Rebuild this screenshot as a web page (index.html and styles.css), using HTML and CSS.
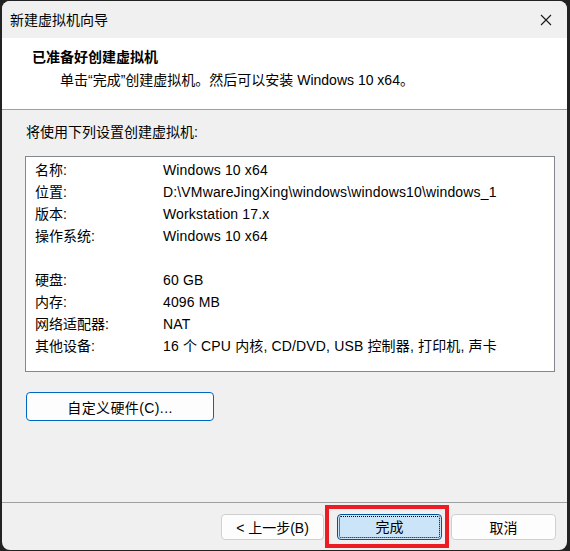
FILE: index.html
```html
<!DOCTYPE html>
<html lang="zh-CN">
<head>
    <meta charset="UTF-8">
    <meta name="viewport" content="width=device-width, initial-scale=1.0">
    <title>新建虚拟机向导</title>
    <link rel="stylesheet" href="styles.css">
</head>
<body>
    <div class="window">
        <!-- 标题栏 -->
        <div class="titlebar">
            <span class="title">新建虚拟机向导</span>
            <svg class="close" width="12" height="12" viewBox="0 0 12 12">
                <path d="M1 1 L11 11 M11 1 L1 11" stroke="#1a1a1a" stroke-width="1.1" fill="none"/>
            </svg>
        </div>

        <!-- 顶部说明 -->
        <div class="header">
            <div class="header-title">已准备好创建虚拟机</div>
            <div class="header-sub">单击“完成”创建虚拟机。然后可以安装 Windows 10 x64。</div>
        </div>

        <div class="content">
            <div class="intro">将使用下列设置创建虚拟机:</div>

            <div class="summary">
                <div class="row"><span>名称:</span><span class="val">Windows 10 x64</span></div>
                <div class="row"><span>位置:</span><span class="val">D:\VMwareJingXing\windows\windows10\windows_1</span></div>
                <div class="row"><span>版本:</span><span class="val">Workstation 17.x</span></div>
                <div class="row"><span>操作系统:</span><span class="val">Windows 10 x64</span></div>
                <div class="row"><span></span><span></span></div>
                <div class="row"><span>硬盘:</span><span class="val">60 GB</span></div>
                <div class="row"><span>内存:</span><span class="val">4096 MB</span></div>
                <div class="row"><span>网络适配器:</span><span class="val">NAT</span></div>
                <div class="row"><span>其他设备:</span><span class="val">16 个 CPU 内核, CD/DVD, USB 控制器, 打印机, 声卡</span></div>
            </div>

            <button class="btn btn-custom">自定义硬件(C)...</button>
        </div>

        <!-- 底部按钮 -->
        <div class="footer">
            <button class="btn btn-back">&lt; 上一步(B)</button>
            <div class="highlight">
                <button class="btn btn-finish"><span>完成</span></button>
            </div>
            <button class="btn btn-cancel">取消</button>
        </div>
    </div>
</body>
</html>
```

FILE: styles.css
```css
body {
    margin: 0;
    background: #222;
    font-family: 'Liberation Sans', 'Noto Sans CJK SC', sans-serif;
    font-size: 14px;
    color: #000;
}
.window {
    margin: 1px 3px 1px 2px;
    height: 549px;
    border-radius: 8px;
    overflow: hidden;
    background: #f0f0f0;
    display: flex;
    flex-direction: column;
}
.titlebar {
    height: 37px;
    display: flex;
    align-items: center;
    justify-content: space-between;
    padding: 0 15px 0 8px;
    background: #f0f0f0;
}
.title {
    font-size: 14px;
    line-height: 20px;
}
.close {
    display: block;
}
.header {
    background: #fff;
    height: 72px;
    border-bottom: 1px solid #a0a0a0;
    padding: 9px 0 0 30px;
    box-sizing: border-box;
}
.header-title {
    font-weight: bold;
    line-height: 20px;
}
.header-sub {
    padding-left: 28px;
    line-height: 26px;
}
.content {
    padding: 12px 0 0 23px;
}
.intro {
    line-height: 20px;
    padding-left: 1px;
}
.summary {
    margin-top: 14px;
    width: 530px;
    height: 216px;
    box-sizing: border-box;
    border: 1px solid #828790;
    background: #fff;
    padding: 2px 0 0 9px;
}
.row {
    display: grid;
    grid-template-columns: 128px 1fr;
    height: 22px;
    line-height: 22px;
    white-space: nowrap;
}
.val {
    letter-spacing: 0.15px;
}
.btn {
    font-family: inherit;
    font-size: 14px;
    color: #000;
    background: #fdfdfd;
    border: 1px solid #d0d0d0;
    border-radius: 4px;
    padding: 0;
    height: 26px;
    box-sizing: border-box;
}
.btn-custom {
    display: block;
    margin: 20px 0 0 1px;
    width: 188px;
    height: 29px;
    border-color: #0067c0;
    letter-spacing: 0.4px;
}
.footer {
    margin-top: auto;
    height: 47px;
    border-top: 1px solid #a0a0a0;
    display: flex;
    align-items: flex-start;
    padding-left: 219px;
}
.btn-back {
    width: 103px;
    margin-top: 11px;
}
.highlight {
    margin-left: 1px;
    width: 124px;
    height: 43px;
    box-sizing: border-box;
    border: 4px solid #ed1c24;
    padding: 5px 0 0 8px;
    margin-top: 2px;
}
.btn-finish {
    width: 105px;
    background: #cce4f7;
    border-color: #005499;
    padding: 1px;
}
.btn-finish span {
    display: block;
    height: 100%;
    box-sizing: border-box;
    border: 1px dotted #000;
    border-radius: 2px;
    line-height: 20px;
}
.btn-cancel {
    width: 105px;
    margin: 11px 0 0 2px;
}
```
